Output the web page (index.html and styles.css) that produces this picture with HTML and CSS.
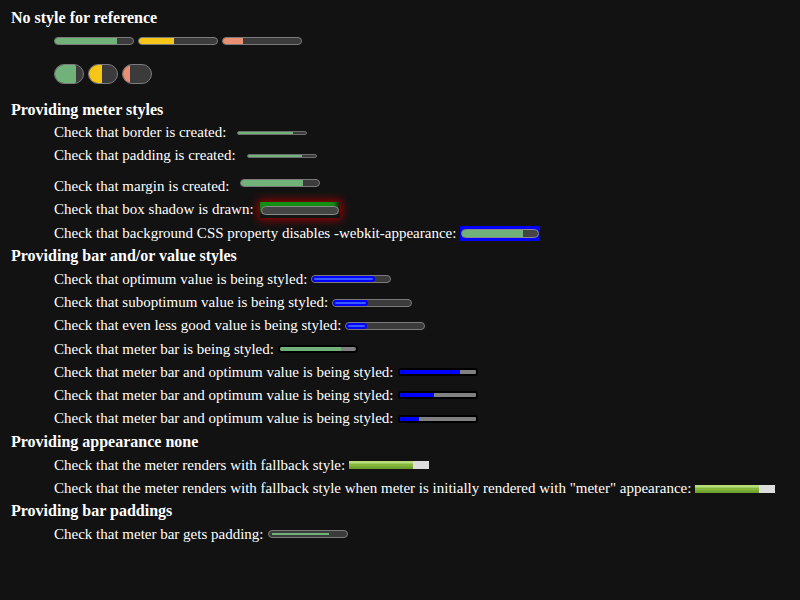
FILE: index.html
```html
<!DOCTYPE html>
<html>
<head>
<meta charset="utf-8">
<link rel="stylesheet" href="styles.css">
</head>
<body>
<div class="page">
  <div class="h first">No style for reference</div>
  <div class="row meters">
    <span class="m m80"><span class="f green" style="width:80%"></span></span>
    <span class="m m80"><span class="f yellow" style="width:45%"></span></span>
    <span class="m m80"><span class="f red" style="width:25%"></span></span>
  </div>
  <div class="row pills">
    <span class="m pill"><span class="f green" style="width:75%"></span></span>
    <span class="m pill"><span class="f yellow" style="width:48%"></span></span>
    <span class="m pill"><span class="f red" style="width:25%"></span></span>
  </div>

  <div class="h sec2">Providing meter styles</div>
  <div class="row item"><span>Check that border is created:</span><span class="m thin wide-gap"><span class="f green" style="width:80%"></span></span></div>
  <div class="row item"><span>Check that padding is created:</span><span class="m thin wide-gap"><span class="f green" style="width:80%"></span></span></div>
  <div class="row item tall"><span>Check that margin is created:</span><span class="m m80 mb"><span class="f green" style="width:80%"></span></span></div>
  <div class="row item"><span>Check that box shadow is drawn:</span><span class="shadowbox"><span class="m inner"></span></span></div>
  <div class="row item"><span>Check that background CSS property disables -webkit-appearance:</span><span class="bluebox"><span class="m inner"><span class="f green" style="width:80%"></span></span></span></div>

  <div class="h">Providing bar and/or value styles</div>
  <div class="row item"><span>Check that optimum value is being styled:</span><span class="m m80"><span class="f bluef" style="width:80%"></span></span></div>
  <div class="row item"><span>Check that suboptimum value is being styled:</span><span class="m m80"><span class="f bluef" style="width:45%"></span></span></div>
  <div class="row item"><span>Check that even less good value is being styled:</span><span class="m m80"><span class="f bluef" style="width:26%"></span></span></div>
  <div class="row item"><span>Check that meter bar is being styled:</span><span class="bm"><span class="f green" style="width:80%"></span></span></div>
  <div class="row item"><span>Check that meter bar and optimum value is being styled:</span><span class="bm sq"><span class="f blue" style="width:80%"></span></span></div>
  <div class="row item"><span>Check that meter bar and optimum value is being styled:</span><span class="bm sq"><span class="f blue" style="width:46%"></span></span></div>
  <div class="row item"><span>Check that meter bar and optimum value is being styled:</span><span class="bm sq"><span class="f blue" style="width:25%"></span></span></div>

  <div class="h sec4">Providing appearance none</div>
  <div class="row item"><span>Check that the meter renders with fallback style:</span><span class="fb"><span class="f lime" style="width:80%"></span></span></div>
  <div class="row item"><span>Check that the meter renders with fallback style when meter is initially rendered with "meter" appearance:</span><span class="fb"><span class="f lime" style="width:80%"></span></span></div>

  <div class="h sec5">Providing bar paddings</div>
  <div class="row item"><span>Check that meter bar gets padding:</span><span class="m m80 padded"><span class="f green" style="width:80%"></span></span></div>
</div>
</body>
</html>
```
FILE: styles.css
```css
html, body {
  margin: 0;
  padding: 0;
  background: #121212;
}
.page {
  padding: 6.5px 0 0 11px;
  color: #ffffff;
  font-family: "Liberation Serif", "Times New Roman", serif;
  font-size: 15px;
  display: flex;
  flex-direction: column;
}
.h {
  font-weight: bold;
  font-size: 16px;
  height: 23.2px;
  display: flex;
  align-items: center;
}
.sec2 { margin-top: 2.8px; }
.sec4 { margin-top: 0.5px; }
.sec5 { margin-top: -0.8px; }
.row {
  height: 23.2px;
  display: flex;
  align-items: center;
  white-space: nowrap;
}
.meters, .pills, .item {
  padding-left: 43px;
  gap: 4px;
}
.meters { margin-top: -0.5px; }
.pills { height: 42.8px; }
.tall { margin-top: 7.6px; }

.m {
  position: relative;
  box-sizing: border-box;
  border: 1px solid #7b7b7b;
  background: #3b3b3b;
  border-radius: 999px;
  overflow: hidden;
  display: flex;
}
.f {
  display: block;
  height: 100%;
}
.m80 { width: 80px; height: 8px; }
.pill { width: 30px; height: 20px; }
.thin { width: 70px; height: 4px; border-color: #6d6d6d; }
.wide-gap { margin-left: 7px; }
.mb { margin-bottom: 8px; margin-left: 6px; }

.green { background: #70b27a; }
.yellow { background: #f5c518; }
.red { background: #e98f74; }

.shadowbox {
  display: flex;
  align-items: center;
  justify-content: center;
  width: 80px;
  height: 16px;
  box-sizing: border-box;
  padding-top: 2px;
  margin-left: 2px;
  background: #129012;
  box-shadow: inset -3px -7px 5px #141414, 0 0 8px 2px rgba(170, 0, 0, 0.9);
}
.inner {
  width: 78px;
  height: 9px;
  background: #454545;
  border-color: #8a8a8a;
}
.bluebox {
  display: flex;
  align-items: center;
  justify-content: center;
  width: 80px;
  height: 15px;
  background: #0000ff;
}

.bluef {
  box-sizing: border-box;
  border: 2px solid #0000ff;
  background: #3a5cff;
  border-radius: 999px;
}
.bm {
  display: flex;
  box-sizing: border-box;
  width: 80px;
  height: 8px;
  border: 2px solid #000000;
  border-radius: 4px;
  background: #808080;
  overflow: hidden;
}
.bm.sq { border-radius: 3px; }
.blue { background: #0000ff; }

.fb {
  display: flex;
  width: 80px;
  height: 8px;
  background: #dcdcdc;
}
.lime {
  background: linear-gradient(#b5dd7b 0%, #b5dd7b 25%, #86b83d 40%, #86b83d 60%, #74a532 75%, #6e9e2e 100%);
}
.padded {
  padding: 2px 3px;
  align-items: center;
}
.padded .f { height: 2px; }
```
